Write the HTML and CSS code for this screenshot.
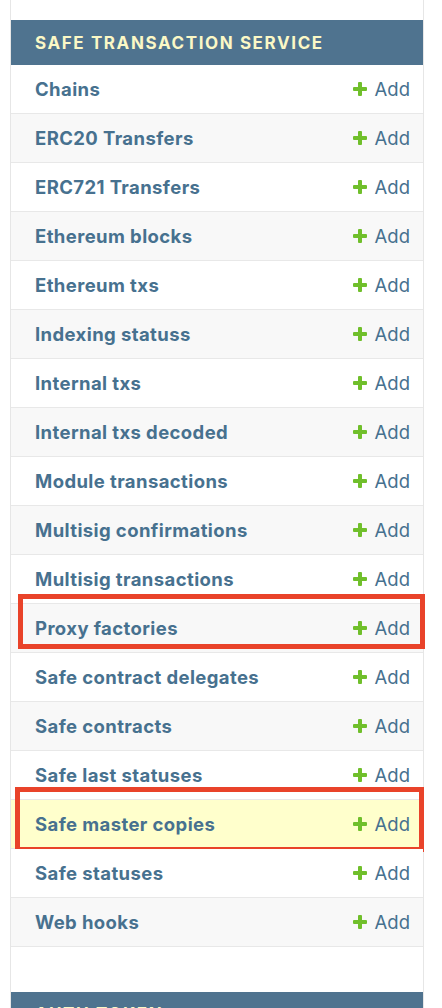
FILE: index.html
```html
<!DOCTYPE html>
<html>
<head>
<meta charset="utf-8">
<link rel="stylesheet" href="styles.css">
</head>
<body>
<div class="sidebar">
  <div class="module">
    <div class="caption">Safe Transaction Service</div>
    <div class="row"><a class="name">Chains</a><a class="add"><span class="plus"></span>Add</a></div>
    <div class="row"><a class="name">ERC20 Transfers</a><a class="add"><span class="plus"></span>Add</a></div>
    <div class="row"><a class="name">ERC721 Transfers</a><a class="add"><span class="plus"></span>Add</a></div>
    <div class="row"><a class="name">Ethereum blocks</a><a class="add"><span class="plus"></span>Add</a></div>
    <div class="row"><a class="name">Ethereum txs</a><a class="add"><span class="plus"></span>Add</a></div>
    <div class="row"><a class="name">Indexing statuss</a><a class="add"><span class="plus"></span>Add</a></div>
    <div class="row"><a class="name">Internal txs</a><a class="add"><span class="plus"></span>Add</a></div>
    <div class="row"><a class="name">Internal txs decoded</a><a class="add"><span class="plus"></span>Add</a></div>
    <div class="row"><a class="name">Module transactions</a><a class="add"><span class="plus"></span>Add</a></div>
    <div class="row"><a class="name">Multisig confirmations</a><a class="add"><span class="plus"></span>Add</a></div>
    <div class="row"><a class="name">Multisig transactions</a><a class="add"><span class="plus"></span>Add</a></div>
    <div class="row"><a class="name">Proxy factories</a><a class="add"><span class="plus"></span>Add</a><div class="mark mark-proxy"></div></div>
    <div class="row"><a class="name">Safe contract delegates</a><a class="add"><span class="plus"></span>Add</a></div>
    <div class="row"><a class="name">Safe contracts</a><a class="add"><span class="plus"></span>Add</a></div>
    <div class="row"><a class="name">Safe last statuses</a><a class="add"><span class="plus"></span>Add</a></div>
    <div class="row selected"><a class="name">Safe master copies</a><a class="add"><span class="plus"></span>Add</a><div class="mark mark-master"></div></div>
    <div class="row"><a class="name">Safe statuses</a><a class="add"><span class="plus"></span>Add</a></div>
    <div class="row"><a class="name">Web hooks</a><a class="add"><span class="plus"></span>Add</a></div>
  </div>
  <div class="module">
    <div class="caption next">Auth Token</div>
  </div>
</div>
</body>
</html>
```

FILE: styles.css
```css
html, body {
  margin: 0;
  padding: 0;
  background: #ffffff;
}
body {
  font-family: Inter, "Noto Sans", sans-serif;
  overflow: hidden;
  height: 1008px;
}
.sidebar {
  margin-left: 10px;
  width: 412px;
  border-left: 1px solid #e6e6e6;
  border-right: 1px solid #e6e6e6;
  padding-top: 20px;
  min-height: 1100px;
}
.module {
  margin-bottom: 45px;
}
.caption {
  height: 45px;
  box-sizing: border-box;
  background: #4f738f;
  color: #fbf8c6;
  text-transform: uppercase;
  font-weight: 700;
  font-size: 17px;
  letter-spacing: 1.6px;
  padding-left: 24px;
  display: flex;
  align-items: center;
}
.caption.next {
  align-items: flex-start;
  padding-top: 12px;
}
.row {
  position: relative;
  height: 49px;
  box-sizing: border-box;
  border-bottom: 1px solid #e8e8e8;
  display: flex;
  align-items: center;
  justify-content: space-between;
  padding: 0 13px 0 24px;
  background: #ffffff;
}
.row:nth-child(odd) {
  background: #f8f8f8;
}
.row.selected {
  background: #ffffcc;
}
.name {
  color: #47718f;
  font-weight: 650;
  font-size: 18.5px;
  letter-spacing: 0.4px;
}
.add {
  color: #47718f;
  font-size: 18.5px;
  display: flex;
  align-items: center;
}
.plus {
  position: relative;
  width: 14px;
  height: 14px;
  margin-right: 8px;
}
.plus::before, .plus::after {
  content: "";
  position: absolute;
  background: #70bf2b;
  border-radius: 1px;
}
.plus::before {
  left: 0;
  top: 5px;
  width: 14px;
  height: 4px;
}
.plus::after {
  left: 5px;
  top: 0;
  width: 4px;
  height: 14px;
}
.mark {
  position: absolute;
  border: 5px solid #e9432a;
  box-sizing: border-box;
  pointer-events: none;
}
.mark-proxy {
  left: 7px;
  top: -10px;
  width: 407px;
  height: 55px;
}
.mark-master {
  left: 4px;
  top: -13px;
  width: 409px;
  height: 65px;
}
```
